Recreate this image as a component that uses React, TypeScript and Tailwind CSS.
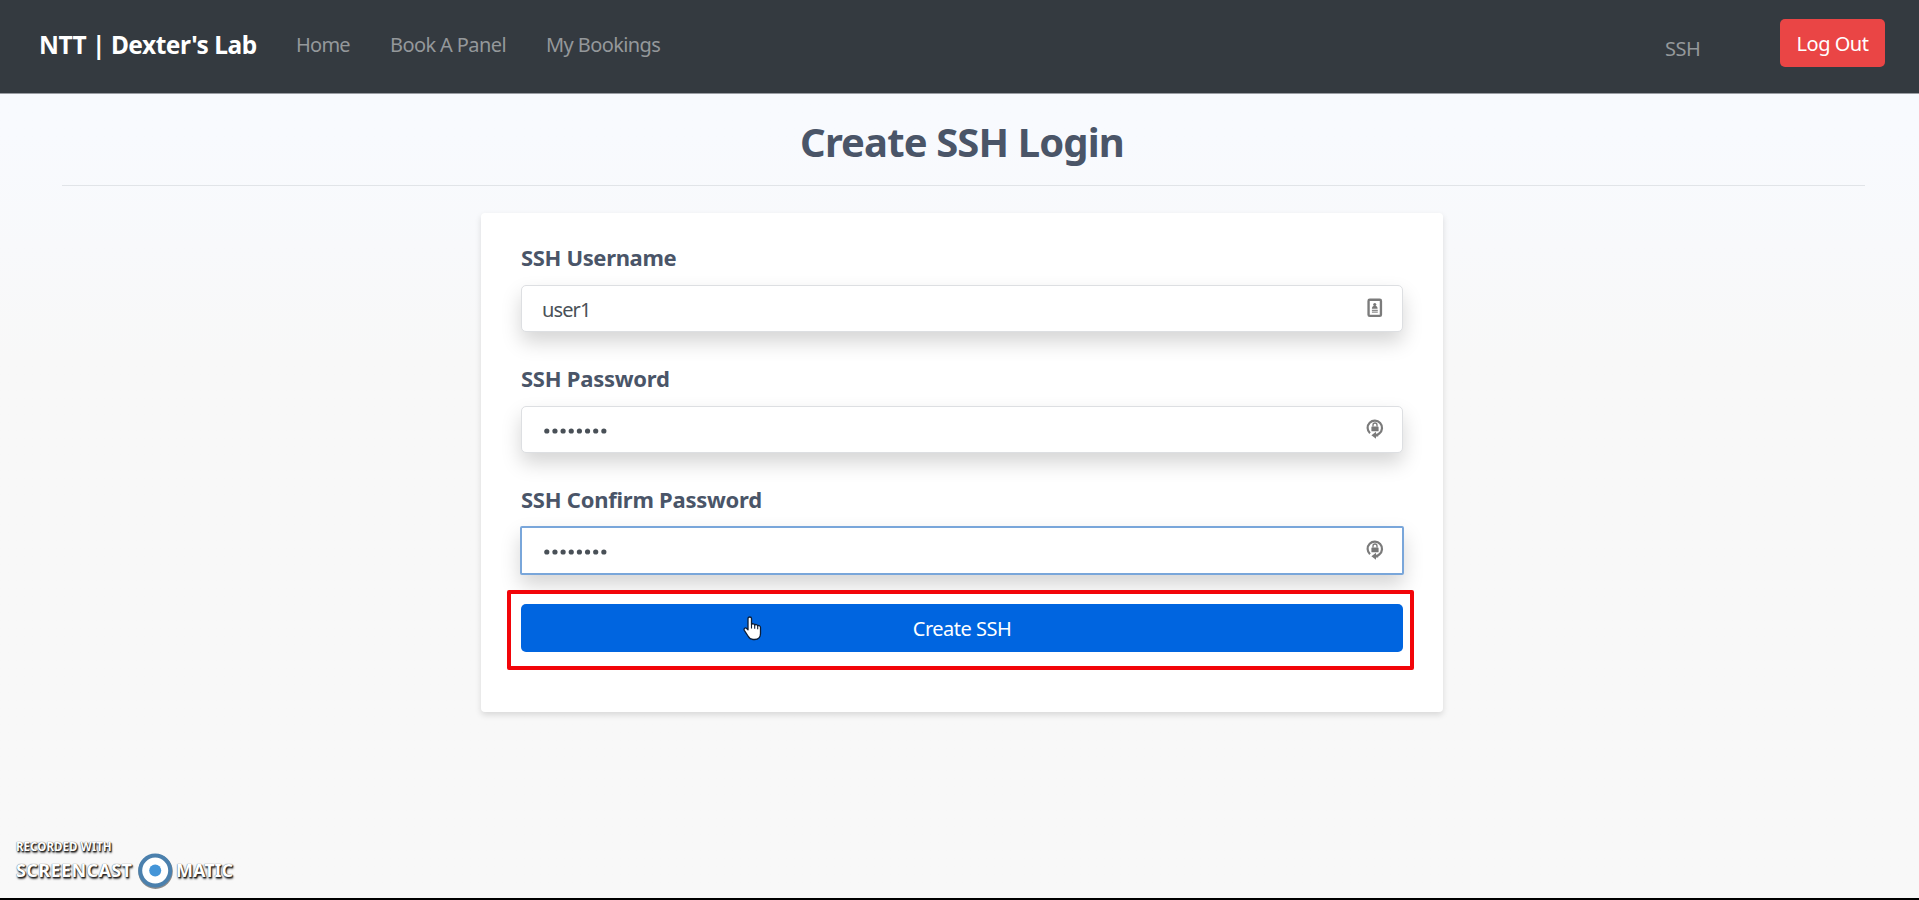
import { useState } from "react";

const navLinks = [
  { label: "Home", style: "ml-[40px] w-[53px] tracking-[-0.75px]" },
  { label: "Book A Panel", style: "ml-[41px] w-[115px] tracking-[-0.6px]" },
  { label: "My Bookings", style: "ml-[41px] w-[115px] tracking-[-0.6px]" },
];

function ContactIcon() {
  return (
    <svg className="-mt-[2px]" width="16" height="20" viewBox="0 0 16 20" fill="none">
      <rect x="1.6" y="1.6" width="12.6" height="16.4" rx="1.2" stroke="#7b7b7b" strokeWidth="2.4" />
      <circle cx="7.9" cy="6.4" r="1.6" fill="#777" />
      <path d="M5 10.8c0-1.9 1-3.2 2.9-3.2s2.9 1.3 2.9 3.2z" fill="#777" />
      <path d="M5 12.4h6M5 14.2h6" stroke="#8c8c8c" strokeWidth="1.1" />
    </svg>
  );
}

function LockCycleIcon() {
  return (
    <svg className="-mt-[2px]" width="18" height="22" viewBox="0 0 18 22" fill="none">
      <path d="M4 15.2A7.2 7.2 0 1 1 13.4 15.4Q12 16.8 10 17.2" stroke="#7b7b7b" strokeWidth="2.2" />
      <path d="M5.4 17.2L10 13.8V20.8z" fill="#7b7b7b" />
      <path d="M9 17.2h3.2" stroke="#7b7b7b" strokeWidth="2.6" />
      <rect x="5.4" y="8.4" width="7.2" height="4.9" rx="0.6" fill="#777" />
      <path d="M7 8.6V7a2 2 0 0 1 4 0v1.6" stroke="#777" strokeWidth="1.3" />
    </svg>
  );
}

function PasswordDots() {
  return (
    <svg width="64" height="8" viewBox="0 0 64 8" fill="#495057">
      {Array.from({ length: 8 }, (_, i) => (
        <circle key={i} cx={3.8 + i * 8.15} cy="4" r="2.6" />
      ))}
    </svg>
  );
}

function Watermark() {
  return (
    <div className="absolute left-[16px] top-[839px] text-white [text-shadow:0_0_1px_#333,1px_1px_1px_#222,1px_2px_2px_#444]">
      <div className="text-[11.5px] font-bold leading-[16px] tracking-[0.05px]">RECORDED WITH</div>
      <div className="-mt-px flex items-center leading-[32px]">
        <span className="-mt-[4px] w-[122px] whitespace-nowrap text-[18px] font-bold tracking-[0.4px]">SCREENCAST</span>
        <svg className="-mt-px" width="35" height="36" viewBox="0 0 35 36">
          <circle cx="17.5" cy="18.6" r="15.3" fill="none" stroke="#8b8b8b" strokeWidth="4" />
          <circle cx="17.2" cy="17.6" r="15" fill="#fff" stroke="#4b80ad" strokeWidth="4" />
          <circle cx="17.2" cy="17.6" r="6" fill="#4495d8" />
        </svg>
        <span className="-mt-[4px] ml-[3px] text-[18px] font-bold">MATIC</span>
      </div>
    </div>
  );
}

export default function App() {
  const [username, setUsername] = useState("user1");

  return (
    <div className="relative flex h-[900px] w-[1919px] flex-col overflow-hidden bg-linear-to-b from-[#f8fafe] from-15% to-[#f8f8f8] to-40% font-['Noto_Sans','Open_Sans',sans-serif] text-[#495057]">
      <header className="flex h-[94px] shrink-0 items-start border-b border-[#9a9da3] bg-[#343a40] pl-[39px] pr-[34px] pt-[19px] text-[20px] leading-[30px] text-[#94989b]">
        <div className="mt-[9px] w-[217px] whitespace-nowrap text-[24.5px] font-bold leading-[34px] tracking-[-0.5px] text-white">
          NTT | Dexter's Lab
        </div>
        <nav className="mt-[11px] flex">
          {navLinks.map((link) => (
            <a key={link.label} className={`whitespace-nowrap ${link.style}`}>{link.label}</a>
          ))}
        </nav>
        <a className="ml-auto mt-[15px] w-[115px] tracking-[-0.5px]">SSH</a>
        <button className="h-[48px] w-[105px] whitespace-nowrap rounded-[5px] bg-[#ea4545] pt-[2px] tracking-[-0.5px] text-white">
          Log Out
        </button>
      </header>

      <main className="flex flex-col items-center">
        <div className="mr-[-8px] flex h-[92px] w-[1803px] justify-center border-b border-[#e1e4e8] pr-[3px] pt-[18px]">
          <h1 className="whitespace-nowrap text-[40px] font-bold leading-[60px] tracking-[-0.88px] text-[#4a5568]">
            Create SSH Login
          </h1>
        </div>

        <form className="mt-[27px] ml-[5px] flex h-[499px] w-[962px] flex-col rounded-[4px] bg-white px-[40px] pt-[27px] shadow-[0_3px_6px_rgba(0,0,0,0.13)]">
          <label className="text-[22px] font-bold leading-[34px] tracking-[-0.35px] text-[#4a5568]">SSH Username</label>
          <div className="mt-[11px] flex h-[47px] items-center rounded-[5px] border border-[#dddfe2] bg-white pl-[20px] pr-[19px] shadow-[0_10px_20px_rgba(0,0,0,0.17)]">
            <input
              className="w-full bg-transparent pt-[2px] text-[20px] leading-[30px] tracking-[-0.9px] outline-none"
              value={username}
              onChange={(event) => setUsername(event.target.value)}
            />
            <ContactIcon />
          </div>

          <label className="mt-[29px] text-[22px] font-bold leading-[34px] tracking-[-0.25px] text-[#4a5568]">SSH Password</label>
          <div className="mt-[11px] flex h-[47px] items-center justify-between rounded-[5px] border border-[#dddfe2] bg-white pl-[21px] pr-[18px] shadow-[0_10px_20px_rgba(0,0,0,0.17)]">
            <div className="pt-[3px]"><PasswordDots /></div>
            <LockCycleIcon />
          </div>

          <label className="mt-[29px] text-[22px] font-bold leading-[34px] tracking-[-0.25px] text-[#4a5568]">SSH Confirm Password</label>
          <div className="mx-[-1px] mt-[10px] flex h-[49px] items-center justify-between rounded-[2px] border-2 border-[#79a6da] bg-white pl-[21px] pr-[18px] shadow-[0_10px_20px_rgba(0,0,0,0.17)]">
            <div className="pt-[3px]"><PasswordDots /></div>
            <LockCycleIcon />
          </div>

          <div className="relative z-10 ml-[-14px] mr-[-11px] mt-[15px] h-[80px] shrink-0 rounded-[2px] border-4 border-[#f20509] bg-white pl-[10px] pr-[7px] pt-[10px]">
            <button type="button" className="h-[48px] w-full rounded-[5px] bg-[#0065e0] pt-[2px] text-[20px] leading-[30px] tracking-[-0.5px] text-white">
              Create SSH
            </button>
            <svg className="absolute left-[231px] top-[21px]" width="22" height="28" viewBox="0 0 22 28">
              <path
                d="M6 3.5c0-2 3.5-2 3.5 0v6c.8-1.2 3-.8 3.2.5.9-.9 2.8-.5 3 .8 1-.7 2.8 0 2.8 1.6v6.1c0 3.5-2.2 6-5.8 6H11c-2.5 0-3.8-1.3-5-3.5l-3.7-5.6c-1-1.8 1-3.2 2.4-1.9L6 14.8z"
                fill="#fff" stroke="#0c1d35" strokeWidth="1.3" strokeLinejoin="round"
              />
              <path d="M9.5 9.5v4M12.7 10v3.7M15.7 11v3.2" stroke="#0c1d35" strokeWidth="1.1" />
            </svg>
          </div>
        </form>
      </main>

      <Watermark />
      <div className="absolute bottom-0 left-0 h-[2px] w-full bg-black" />
    </div>
  );
}
